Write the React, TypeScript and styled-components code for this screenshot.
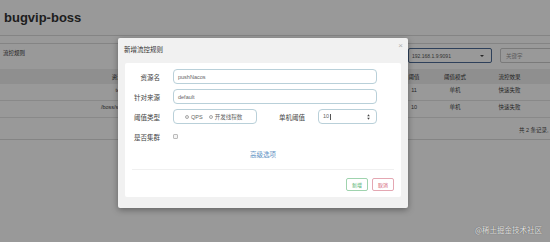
import React from "react";
import styled, { createGlobalStyle } from "styled-components";

const GlobalStyle = createGlobalStyle`
  html, body { margin: 0; padding: 0; width: 550px; height: 242px; overflow: hidden; background: #fff; }
  body { font-family: "Liberation Sans", Arial, "Noto Sans CJK SC", sans-serif; }
  * { box-sizing: border-box; }
`;

const Screen = styled.div`
  position: relative;
  width: 550px;
  height: 242px;
  overflow: hidden;
  background: #fff;
`;

const Page = styled.div`
  width: 603px;
  color: #333;
`;

const Header = styled.header`
  height: 36px;
  border-bottom: 1px solid #ddd;
  display: flex;
  align-items: center;
  padding-left: 4px;
  font-size: 13px;
  font-weight: bold;
  color: #333;
`;

const Panel = styled.section`
  margin-top: 7px;
  border-top: 1px solid #ddd;
`;

const PanelHeading = styled.div`
  height: 25px;
  display: flex;
  align-items: flex-start;
  gap: 8px;
  padding: 4px 43px 0 3px;
`;

const PanelTitle = styled.div`
  flex: 1;
  font-size: 5.5px;
  line-height: 10px;
  color: #333;
`;

const SelectBox = styled.div`
  width: 84px;
  height: 15px;
  border: 1px solid #4d6c96;
  border-radius: 2px;
  display: flex;
  align-items: center;
  justify-content: space-between;
  padding: 0 7px 0 3px;
  font-size: 5px;
  color: #555;
  background: #fff;
`;

const Caret = styled.span`
  width: 0;
  height: 0;
  border-left: 2px solid transparent;
  border-right: 2px solid transparent;
  border-top: 2.5px solid #444;
`;

const SearchBox = styled.div`
  width: 60px;
  height: 15px;
  border: 1px solid #ccc;
  border-radius: 2px;
  display: flex;
  align-items: center;
  padding-left: 5px;
  font-size: 5.5px;
  color: #999;
  background: #fff;
`;

const cols = "240px 70px 84px 40px 42px 67px";

const TableHead = styled.div`
  display: grid;
  grid-template-columns: ${cols};
  height: 15px;
  background: #eee;
  align-items: center;
  font-size: 5.5px;
  color: #333;
`;

const TableRow = styled.div`
  display: grid;
  grid-template-columns: ${cols};
  height: 17px;
  line-height: 12px;
  border-bottom: 1px solid #e4e4e4;
  font-size: 5.5px;
  color: #444;
`;

const Cell = styled.div`
  text-align: center;
  white-space: nowrap;
  overflow: visible;
`;

const Footer = styled.div`
  height: 22px;
  padding: 6px 0 0 519px;
  line-height: 12px;
  font-size: 5.5px;
  color: #444;
  border-bottom: 1px solid #ddd;
  white-space: nowrap;
`;

const Backdrop = styled.div`
  position: absolute;
  inset: 0;
  background: rgba(0, 0, 0, 0.4);
`;

const Modal = styled.div`
  position: absolute;
  left: 118px;
  top: 38px;
  width: 290px;
  height: 170px;
  background: #f1f1f1;
  border-radius: 2px;
  box-shadow: 0 2px 6px rgba(0, 0, 0, 0.35);
  display: flex;
  flex-direction: column;
  font-family: "Noto Sans CJK SC", "Liberation Sans", sans-serif;
`;

const ModalHeader = styled.div`
  position: relative;
  height: 25px;
  padding: 5px 0 0 6px;
  font-size: 6.5px;
  line-height: 12px;
  color: #333;
`;

const Close = styled.span`
  position: absolute;
  top: 2px;
  right: 5px;
  font-family: "Liberation Sans", sans-serif;
  font-size: 8px;
  color: #b0b0b0;
`;

const Body = styled.div`
  margin: 0 7px;
  height: 134px;
  background: #fff;
  border-radius: 2px;
  padding: 6px 0 0 0;
  display: flex;
  flex-direction: column;
`;

const Form = styled.div`
  display: flex;
  flex-direction: column;
  gap: 5px;
  padding-right: 24px;
`;

const Row = styled.div`
  display: flex;
  align-items: center;
  height: 15px;
`;

const Label = styled.label<{ $w?: number }>`
  width: ${(p) => p.$w ?? 35}px;
  margin-right: 13px;
  text-align: right;
  font-size: 6.5px;
  color: #444;
  white-space: nowrap;
`;

const Input = styled.div`
  flex: 1;
  height: 15px;
  border: 1px solid #b9d0d9;
  border-radius: 4px;
  display: flex;
  align-items: center;
  padding: 0 4px;
  font-family: "Liberation Sans", sans-serif;
  font-size: 5.5px;
  color: #666;
`;

const NumberInput = styled(Input)`
  justify-content: space-between;
  padding-right: 6px;
`;

const TextCaret = styled.span`
  display: inline-block;
  width: 0.6px;
  height: 6px;
  background: #555;
  margin-left: 0.5px;
  vertical-align: middle;
`;

const RadioGroup = styled.div`
  width: 84px;
  height: 15px;
  border: 1px solid #b9d0d9;
  border-radius: 4px;
  display: flex;
  align-items: center;
  padding-left: 11px;
  gap: 2px;
  font-size: 5.5px;
  color: #666;
`;

const Radio = styled.span<{ $on?: boolean }>`
  width: 4px;
  height: 4px;
  border-radius: 50%;
  border: 0.6px solid #aaa;
  background: ${(p) => (p.$on ? "radial-gradient(circle, #555 0 40%, #eee 50%)" : "#f4f4f4")};
  flex: none;
`;

const RadioText = styled.span<{ $gap?: number }>`
  margin-right: ${(p) => p.$gap ?? 0}px;
  font-family: "Liberation Sans", "Noto Sans CJK SC", sans-serif;
`;

const Check = styled.span`
  width: 4.5px;
  height: 4.5px;
  border: 0.6px solid #bbb;
  border-radius: 1px;
  background: #f4f4f4;
`;

const Advanced = styled.div`
  margin-top: 5px;
  text-align: center;
  font-size: 6.5px;
  line-height: 10px;
  color: #5f93c4;
`;

const Divider = styled.hr`
  margin: 10px 7px 0;
  border: 0;
  border-top: 1px solid #f0f0f0;
`;

const Actions = styled.div`
  margin-top: 8px;
  display: flex;
  justify-content: flex-end;
  gap: 4px;
  padding-right: 7px;
`;

const Btn = styled.button<{ $tone: "ok" | "cancel" }>`
  width: 22px;
  height: 13px;
  padding: 0;
  border-radius: 2px;
  background: #fff;
  font-family: "Noto Sans CJK SC", sans-serif;
  font-size: 5px;
  line-height: 11px;
  border: 1px solid ${(p) => (p.$tone === "ok" ? "#9fd3ae" : "#e4a7b2")};
  color: ${(p) => (p.$tone === "ok" ? "#4cae6a" : "#d0506a")};
`;

const Watermark = styled.div`
  position: absolute;
  right: 8px;
  bottom: 7px;
  font-family: "Noto Sans CJK SC", sans-serif;
  font-size: 7.5px;
  color: rgba(255, 255, 255, 0.85);
  text-shadow: 0 0 1px rgba(0, 0, 0, 0.6);
`;

const Spinner = () => (
  <svg width="3" height="6" viewBox="0 0 3 6">
    <path d="M1.5 0.3 L2.8 2.3 L0.2 2.3 Z" fill="#444" />
    <path d="M1.5 5.7 L2.8 3.7 L0.2 3.7 Z" fill="#444" />
  </svg>
);

const rows = [
  ["test", "default", "QPS", "11", "单机", "快速失败"],
  ["/boss/sys/menu", "default", "QPS", "10", "单机", "快速失败"],
];

export default function App() {
  return (
    <Screen>
      <GlobalStyle />
      <Page>
        <Header>bugvip-boss</Header>
        <Panel>
          <PanelHeading>
            <PanelTitle>流控规则</PanelTitle>
            <SelectBox>
              192.168.1.9:9091
              <Caret />
            </SelectBox>
            <SearchBox>关键字</SearchBox>
          </PanelHeading>
          <TableHead>
            <Cell>资源名</Cell>
            <Cell>来源应用</Cell>
            <Cell>流控模式</Cell>
            <Cell>阈值</Cell>
            <Cell>阈值模式</Cell>
            <Cell>流控效果</Cell>
          </TableHead>
          {rows.map((r, i) => (
            <TableRow key={i}>
              {r.map((c, j) => (
                <Cell key={j}>{c}</Cell>
              ))}
            </TableRow>
          ))}
          <Footer>共 2 条记录,</Footer>
        </Panel>
      </Page>
      <Backdrop />
      <Modal>
        <ModalHeader>
          新增流控规则
          <Close>×</Close>
        </ModalHeader>
        <Body>
          <Form>
            <Row>
              <Label>资源名</Label>
              <Input>pushNacos</Input>
            </Row>
            <Row>
              <Label>针对来源</Label>
              <Input>default</Input>
            </Row>
            <Row>
              <Label>阈值类型</Label>
              <RadioGroup>
                <Radio $on />
                <RadioText $gap={4}>QPS</RadioText>
                <Radio />
                <RadioText>开发线程数</RadioText>
              </RadioGroup>
              <Label $w={48}>单机阈值</Label>
              <NumberInput>
                <span>
                  10
                  <TextCaret />
                </span>
                <Spinner />
              </NumberInput>
            </Row>
            <Row>
              <Label>是否集群</Label>
              <Check />
            </Row>
          </Form>
          <Advanced>高级选项</Advanced>
          <Divider />
          <Actions>
            <Btn $tone="ok">新增</Btn>
            <Btn $tone="cancel">取消</Btn>
          </Actions>
        </Body>
      </Modal>
      <Watermark>@稀土掘金技术社区</Watermark>
    </Screen>
  );
}
